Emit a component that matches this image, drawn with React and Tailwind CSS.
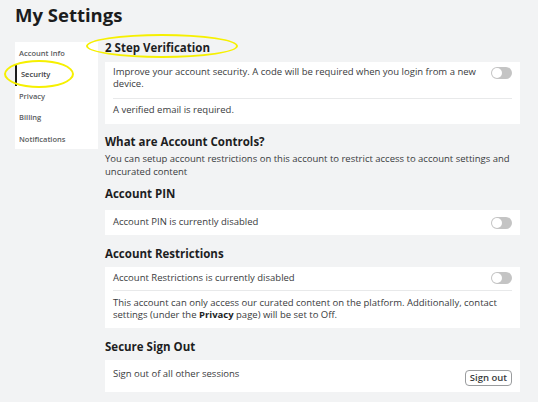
import React from "react";

const navItems = ["Account Info", "Security", "Privacy", "Billing", "Notifications"];

function Toggle() {
  return (
    <div className="w-[21px] h-[12px] rounded-full bg-[#c4c4c4] flex items-center p-[1px] shrink-0">
      <div className="w-[10px] h-[10px] rounded-full bg-white" />
    </div>
  );
}

function Heading({ children, className = "" }) {
  return (
    <h2 className={`text-[11.5px] leading-[16px] font-bold text-[#1d1e1f] ${className}`}>{children}</h2>
  );
}

export default function App() {
  return (
    <div
      className="relative w-[538px] h-[402px] overflow-hidden bg-[#f2f3f4] text-[#393b3d]"
      style={{ fontFamily: '"Open Sans", "Liberation Sans", sans-serif' }}
    >
      <h1 className="pl-[15px] pt-[2px] text-[18.5px] leading-[26px] font-bold text-[#1b1c1d]">My Settings</h1>

      <div className="flex mt-[11px]">
        {/* Sidebar */}
        <div className="ml-[15px] mt-[3px] w-[83px] h-[107px] bg-white py-[0.5px] self-start">
          {navItems.map((item) => (
            <div
              key={item}
              className={`h-[21.5px] flex items-center pl-[4px] text-[7.5px] font-semibold text-[#5a5c5e] ${
                item === "Security" ? "border-l-[2px] border-[#1b1c1d] pl-[2px] text-[#393b3d]" : ""
              }`}
            >
              {item}
            </div>
          ))}
        </div>

        {/* Main */}
        <div className="ml-[7px] w-[415px] text-[9.5px]">
          <Heading className="pt-[1px]">2 Step Verification</Heading>
          <div className="mt-[6px] bg-white px-[8px] pt-[4px] pb-[8px]">
            <div className="flex items-start justify-between pb-[8px]">
              <p className="leading-[12px] w-[372px] shrink-0">
                Improve your account security. A code will be required when you login from a new device.
              </p>
              <div className="pt-[1px]"><Toggle /></div>
            </div>
            <div className="h-px bg-[#e8e9ea]" />
            <p className="mt-[5px] leading-[12px]">A verified email is required.</p>
          </div>

          <Heading className="mt-[10px]">What are Account Controls?</Heading>
          <p className="mt-[2px] leading-[13px] pr-[4px]">
            You can setup account restrictions on this account to restrict access to account settings and uncurated content
          </p>

          <Heading className="mt-[8px]">Account PIN</Heading>
          <div className="mt-[8px] h-[25px] bg-white px-[8px] flex items-center justify-between">
            <span className="leading-[12px] -mt-[2px]">Account PIN is currently disabled</span>
            <Toggle />
          </div>

          <Heading className="mt-[11px]">Account Restrictions</Heading>
          <div className="mt-[5px] bg-white px-[8px] pt-[5px] pb-[7px]">
            <div className="flex items-center justify-between pb-[6px]">
              <span className="leading-[12px]">Account Restrictions is currently disabled</span>
              <Toggle />
            </div>
            <div className="h-px bg-[#e8e9ea]" />
            <p className="mt-[6px] leading-[12px]">
              This account can only access our curated content on the platform. Additionally, contact settings (under the{" "}
              <span className="font-bold text-[#1d1e1f]">Privacy</span> page) will be set to Off.
            </p>
          </div>

          <Heading className="mt-[11px]">Secure Sign Out</Heading>
          <div className="mt-[5px] h-[32px] bg-white px-[8px] flex items-center justify-between">
            <span className="leading-[12px] -mt-[4px]">Sign out of all other sessions</span>
            <button className="mt-[3px] h-[16px] px-[4px] rounded-[4px] border border-[#9a9c9e] text-[9.5px] font-semibold leading-[14px] text-[#393b3d]">
              Sign out
            </button>
          </div>
        </div>
      </div>

      {/* Annotation ellipses */}
      <div className="absolute left-[4px] top-[60px] w-[70px] h-[28px] rounded-[50%] border-[2.5px] border-[#f6f000]" />
      <div className="absolute left-[86px] top-[34px] w-[152px] h-[24px] rounded-[50%] border-[2.5px] border-[#f6f000]" />
    </div>
  );
}
